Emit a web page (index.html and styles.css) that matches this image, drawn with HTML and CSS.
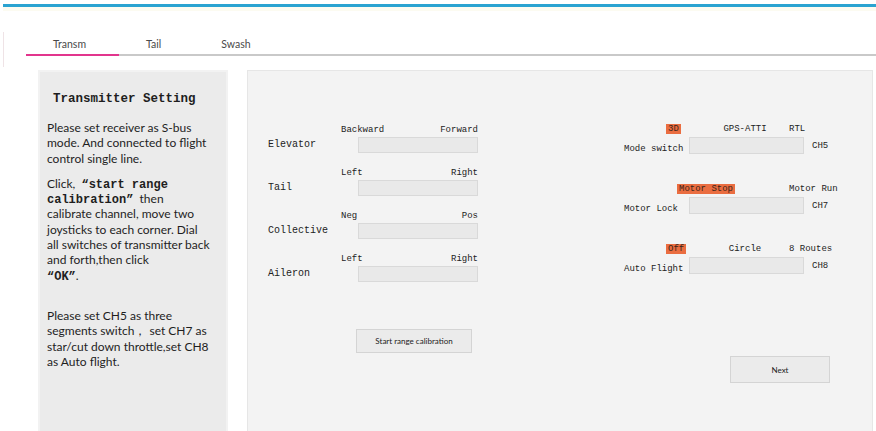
FILE: index.html
```html
<!DOCTYPE html>
<html lang="en">
<head>
<meta charset="utf-8">
<title>Transmitter Setting</title>
<link rel="stylesheet" href="styles.css">
</head>
<body>
  <div class="appbar"></div>
  <div class="appbar-glow"></div>

  <nav class="tabstrip">
    <div class="tabs">
      <span class="tab active">Transm</span>
      <span class="tab">Tail</span>
      <span class="tab">Swash</span>
    </div>
  </nav>

  <main class="workspace">
    <aside class="help">
      <h1 class="help-title">Transmitter Setting</h1>
      <p class="help-text">Please set receiver as S-bus<br>mode. And connected to flight<br>control single line.</p>
      <p class="help-text">Click,&nbsp; <b class="code">“start range<br>calibration”</b>&nbsp; then<br>calibrate channel, move two<br>joysticks to each corner. Dial<br>all switches of transmitter back<br>and forth,then click<br><b class="code">“OK”</b>.</p>
      <p class="help-text gap">Please set CH5 as three<br>segments switch， set CH7 as<br>star/cut down throttle,set CH8<br>as Auto flight.</p>
    </aside>

    <section class="setup">
      <div class="sticks">
        <div class="axis">
          <div class="axis-ends"><span>Backward</span><span>Forward</span></div>
          <span class="axis-name">Elevator</span>
          <div class="track"></div>
        </div>
        <div class="axis">
          <div class="axis-ends"><span>Left</span><span>Right</span></div>
          <span class="axis-name">Tail</span>
          <div class="track"></div>
        </div>
        <div class="axis">
          <div class="axis-ends"><span>Neg</span><span>Pos</span></div>
          <span class="axis-name">Collective</span>
          <div class="track"></div>
        </div>
        <div class="axis">
          <div class="axis-ends"><span>Left</span><span>Right</span></div>
          <span class="axis-name">Aileron</span>
          <div class="track"></div>
        </div>
        <button class="btn btn-calibrate" type="button">Start range calibration</button>
      </div>

      <div class="switches">
        <div class="switch">
          <div class="options">
            <span class="opt"><span class="on">3D</span></span>
            <span class="opt mid">GPS-ATTI</span>
            <span class="opt last">RTL</span>
          </div>
          <span class="switch-name">Mode switch</span>
          <div class="track"></div>
          <span class="channel">CH5</span>
        </div>
        <div class="switch">
          <div class="options">
            <span class="opt wide"><span class="on">Motor Stop</span></span>
            <span class="opt last">Motor Run</span>
          </div>
          <span class="switch-name">Motor Lock</span>
          <div class="track"></div>
          <span class="channel">CH7</span>
        </div>
        <div class="switch">
          <div class="options">
            <span class="opt"><span class="on">Off</span></span>
            <span class="opt mid">Circle</span>
            <span class="opt last">8 Routes</span>
          </div>
          <span class="switch-name">Auto Flight</span>
          <div class="track"></div>
          <span class="channel">CH8</span>
        </div>
        <button class="btn btn-next" type="button">Next</button>
      </div>
    </section>
  </main>
</body>
</html>
```

FILE: styles.css
```css
html, body {
  margin: 0;
  padding: 0;
}

body {
  width: 876px;
  height: 431px;
  overflow: hidden;
  background: #ffffff;
  font-family: Lato, "Open Sans", sans-serif;
  color: #222;
}

/* thin accent bar across the top of the window */
.appbar {
  height: 3px;
  margin: 4px 0 0 3px;
  background: #2ba3d1;
}

.appbar-glow {
  height: 4px;
  margin-left: 3px;
  background: #fcfbf1;
}

/* tab header */
.tabstrip {
  margin: 21px 0 0 3px;
  padding: 0 0 11px 22px;
  border-left: 1px solid #efe3e6;
}

.tabs {
  display: flex;
  border-bottom: 2px solid #c9c9c9;
}

.tab {
  padding: 5px 33px 3px 27px;
  font-size: 10.5px;
  line-height: 14px;
  color: #4a4a4a;
}

.tab.active {
  border-bottom: 2px solid #e2358d;
  margin-bottom: -2px;
}

/* two panels under the tabs */
.workspace {
  display: flex;
  gap: 19px;
  margin-top: 3px;
  padding-left: 38px;
}

.help {
  box-sizing: border-box;
  width: 190px;
  height: 380px;
  padding: 19px 6px 0 7px;
  background: #ebebeb;
  border: 2px solid #f2f2f2;
}

.help-title {
  margin: 0 0 0 6px;
  font-family: "Liberation Mono", monospace;
  font-size: 12.5px;
  line-height: 16px;
  font-weight: bold;
  color: #1e1e1e;
}

.help-text {
  margin: 13px 0 0;
  font-size: 12px;
  line-height: 15.3px;
  color: #1e1e1e;
}

.help-text + .help-text {
  margin-top: 10px;
}

.help-text.gap {
  margin-top: 25px;
}

.code {
  font-family: "Liberation Mono", monospace;
  font-size: 12px;
  line-height: 1;
  font-weight: bold;
}

.setup {
  box-sizing: border-box;
  width: 626px;
  height: 380px;
  display: grid;
  grid-template-columns: 356px 1fr;
  align-content: start;
  padding: 54px 0 0 20px;
  background: #f3f3f3;
  border: 1px solid #e6e6e6;
  font-family: "Liberation Mono", monospace;
  color: #222;
}

/* stick channels: name, end labels and a bar */
.sticks {
  display: flex;
  flex-direction: column;
  align-items: flex-start;
  gap: 15px;
}

.axis {
  display: grid;
  grid-template-columns: 90px 120px;
  grid-template-rows: 10px 16px;
  row-gap: 2px;
}

.axis-ends {
  grid-column: 2;
  grid-row: 1;
  margin-left: -17px;
  display: flex;
  font-size: 9px;
  line-height: 10px;
  white-space: nowrap;
}

.axis-ends span:first-child {
  width: 130px;
}

.axis-name {
  grid-column: 1;
  grid-row: 2;
  align-self: center;
  font-size: 10px;
  line-height: 12px;
}

.track {
  box-sizing: border-box;
  background: #e9e9e9;
  border: 1px solid #d9d9d9;
}

.axis .track {
  grid-column: 2;
  grid-row: 2;
}

/* switch channels */
.switches {
  display: flex;
  flex-direction: column;
  align-items: flex-start;
  gap: 30px;
  margin-top: -1px;
}

.switch {
  display: grid;
  grid-template-columns: 65px 115px auto;
  grid-template-rows: 10px 17px;
  row-gap: 3px;
  font-size: 9px;
  line-height: 10px;
}

.options {
  grid-column: 1 / 4;
  grid-row: 1;
  display: grid;
  grid-template-columns: 55px 48px auto;
  padding-left: 42px;
  white-space: nowrap;
}

.opt.mid {
  justify-self: center;
}

.opt.last {
  grid-column: 3;
  margin-left: 20px;
}

.opt.wide {
  grid-column: 1 / 3;
  margin-left: 11px;
}

.on {
  display: inline-block;
  padding: 0 2px;
  background: #ea6d40;
  color: #3a241a;
}

.switch-name {
  grid-column: 1;
  grid-row: 2;
  align-self: end;
  white-space: nowrap;
}

.switch .track {
  grid-column: 2;
  grid-row: 2;
}

.channel {
  grid-column: 3;
  grid-row: 2;
  align-self: center;
  padding-left: 8px;
}

/* push buttons */
.btn {
  box-sizing: border-box;
  background: #ebebeb;
  border: 1px solid #d4d4d4;
  border-radius: 0;
  font-family: Lato, "Open Sans", sans-serif;
  font-size: 8px;
  color: #222;
  padding: 0;
}

.btn-calibrate {
  width: 116px;
  height: 24px;
  margin: 32px 0 0 88px;
}

.btn-next {
  width: 100px;
  height: 27px;
  margin: 52px 0 0 106px;
}
```
